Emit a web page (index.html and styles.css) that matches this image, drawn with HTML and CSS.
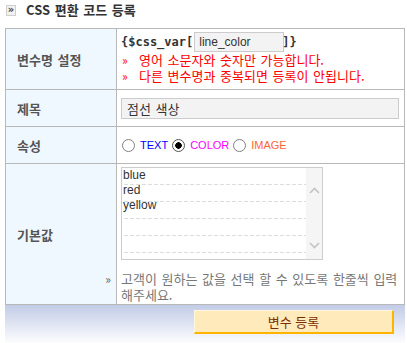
FILE: index.html
```html
<!DOCTYPE html>
<html lang="ko">

<head>
    <meta charset="utf-8">
    <meta name="viewport" content="width=device-width, initial-scale=1.0">
    <title>CSS 편환 코드 등록</title>
    <link rel="stylesheet" href="styles.css">
</head>

<body>

    <header class="title">
        <span class="title-icon">»</span>
        <h1>CSS 편환 코드 등록</h1>
    </header>

    <section class="form">
        <div class="label">변수명 설정</div>
        <div class="value var-cell">
            <div class="var-line">
                <span class="code">{$css_var[</span>
                <input class="var-input" type="text" value="line_color">
                <span class="code close">]}</span>
            </div>
            <p class="warn"><span class="mark">»</span>영어 소문자와 숫자만 가능합니다.</p>
            <p class="warn"><span class="mark">»</span>다른 변수명과 중복되면 등록이 안됩니다.</p>
        </div>

        <div class="label">제목</div>
        <div class="value middle">
            <input class="name-input" type="text" value="점선 색상">
        </div>

        <div class="label">속성</div>
        <div class="value middle radios">
            <label class="opt"><input type="radio" name="kind"><span class="t-text">TEXT</span></label>
            <label class="opt"><input type="radio" name="kind" checked><span class="t-color">COLOR</span></label>
            <label class="opt"><input type="radio" name="kind"><span class="t-image">IMAGE</span></label>
        </div>

        <div class="label tall">
            <span class="label-text">기본값</span>
            <span class="more">»</span>
        </div>
        <div class="value default-cell">
            <div class="valuebox">
                <div class="lines">blue<br>red<br>yellow</div>
                <div class="scroll">
                    <svg width="11" height="7" viewBox="0 0 11 7"><polyline points="1,6 5.5,1.5 10,6" fill="none" stroke="#c4c4c4" stroke-width="1.6"/></svg>
                    <svg width="11" height="7" viewBox="0 0 11 7"><polyline points="1,1 5.5,5.5 10,1" fill="none" stroke="#c4c4c4" stroke-width="1.6"/></svg>
                </div>
            </div>
            <p class="help">고객이 원하는 값을 선택 할 수 있도록 한줄씩 입력 해주세요.</p>
        </div>
    </section>

    <footer class="foot">
        <button class="submit">변수 등록</button>
    </footer>

</body>

</html>
```

FILE: styles.css
```css
body {
    margin: 0;
    font-family: "Noto Sans CJK KR", sans-serif;
    font-size: 13px;
    word-spacing: 1px;
    color: #333;
    background: #fff;
}

.title {
    display: flex;
    align-items: center;
    gap: 10px;
    height: 20px;
    padding-left: 6px;
    margin-bottom: 8px;
}

.title-icon {
    width: 8px;
    height: 9px;
    border: 1px solid #cfcfcf;
    background: #f2f2f2;
    color: #444;
    font-family: "DejaVu Sans", sans-serif;
    font-size: 10px;
    font-weight: bold;
    line-height: 8px;
    text-align: center;
}

h1 {
    margin: 0;
    font-size: 13px;
    line-height: 20px;
    font-weight: bold;
    color: #333;
}

.form {
    display: grid;
    grid-template-columns: 110px 1fr;
    grid-template-rows: 60px 36px 36px 140px;
    gap: 1px;
    width: 400px;
    box-sizing: border-box;
    margin-left: 5px;
    padding: 1px;
    background: #b8b8b8;
}

.label {
    display: flex;
    align-items: center;
    padding-left: 11px;
    background: #f0f8ff;
    color: #555;
    font-weight: bold;
}

.value {
    background: #fff;
    padding: 0 5px 0 4px;
}

.middle {
    display: flex;
    align-items: center;
}

/* 변수명 */
.var-cell {
    padding-top: 3px;
}

.var-line {
    display: flex;
    align-items: center;
    height: 20px;
}

.code {
    font-family: "DejaVu Sans Mono", monospace;
    font-weight: bold;
    font-size: 12px;
    word-spacing: 0;
    color: #333;
}

.close {
    margin-left: -2px;
}

.var-input {
    width: 90px;
    height: 20px;
    box-sizing: border-box;
    margin: 0 0 0 1px;
    padding: 0 4px;
    border: 1px solid #ccc;
    background: #f3f3f3;
    font-family: "Liberation Sans", sans-serif;
    font-size: 12px;
    color: #333;
}

.warn {
    display: flex;
    margin: 0;
    color: #f00;
    line-height: 16px;
}

.mark {
    width: 17px;
    padding-left: 1px;
    font-size: 12px;
}

/* 제목 */
.name-input {
    width: 100%;
    height: 21px;
    box-sizing: border-box;
    padding: 0 5px;
    border: 1px solid #ccc;
    background: #f3f3f3;
    font-family: "Noto Sans CJK KR", sans-serif;
    font-size: 13px;
    word-spacing: 1px;
    color: #333;
}

/* 속성 */
.radios {
    gap: 4px;
    padding-left: 5px;
}

.opt {
    display: flex;
    align-items: center;
    gap: 5px;
    font-family: "Liberation Sans", sans-serif;
    font-size: 11px;
}

.opt input {
    appearance: none;
    width: 13px;
    height: 13px;
    margin: 0;
    border: 1px solid #808080;
    border-radius: 50%;
    background: #fff;
}

.opt input:checked {
    border-color: #555;
    background: radial-gradient(circle, #000 0 3px, #fff 3.5px);
}

.t-text {
    color: #00f;
}

.t-color {
    color: #f0f;
}

.t-image {
    color: #ff6633;
}

/* 기본값 */
.tall {
    display: grid;
    grid-template-rows: 1fr auto 1fr;
    align-items: center;
    padding-right: 5px;
}

.label-text {
    grid-row: 2;
}

.more {
    grid-row: 3;
    align-self: end;
    justify-self: end;
    margin-bottom: 17px;
    font-size: 12px;
    line-height: 16px;
    color: #666;
    font-weight: normal;
}

.default-cell {
    padding-top: 3px;
}

.valuebox {
    display: grid;
    grid-template-columns: 1fr 16px;
    width: 202px;
    height: 93px;
    box-sizing: border-box;
    border: 1px solid #ccc;
}

.lines {
    padding-left: 1px;
    font-family: "Liberation Sans", sans-serif;
    font-size: 12px;
    line-height: 15px;
    color: #333;
    background:
        repeating-linear-gradient(to right, #fff 0 2px, transparent 2px 6px),
        repeating-linear-gradient(to bottom, transparent 0 16px, #dcdcdc 16px 17px);
}

.scroll {
    display: flex;
    flex-direction: column;
    justify-content: space-between;
    align-items: center;
    padding: 19px 0 10px;
    background: #f5f5f5;
}

.help {
    margin: 11px 0 0;
    line-height: 16px;
    color: #777;
}

.foot {
    display: flex;
    justify-content: flex-end;
    align-items: flex-start;
    width: 400px;
    height: 38px;
    box-sizing: border-box;
    margin-left: 5px;
    padding: 5px 11px 0 0;
    background: linear-gradient(#c2cce7, #fdfdfe);
}

.submit {
    width: 200px;
    height: 24px;
    padding: 0;
    border-style: solid;
    border-width: 1px 2px 2px 1px;
    border-color: #fff6dc #ffb400 #ffb400 #fff6dc;
    background: #ffeabc;
    font-family: "Noto Sans CJK KR", sans-serif;
    font-size: 13px;
    word-spacing: 0;
    color: #7b2f00;
}
```
